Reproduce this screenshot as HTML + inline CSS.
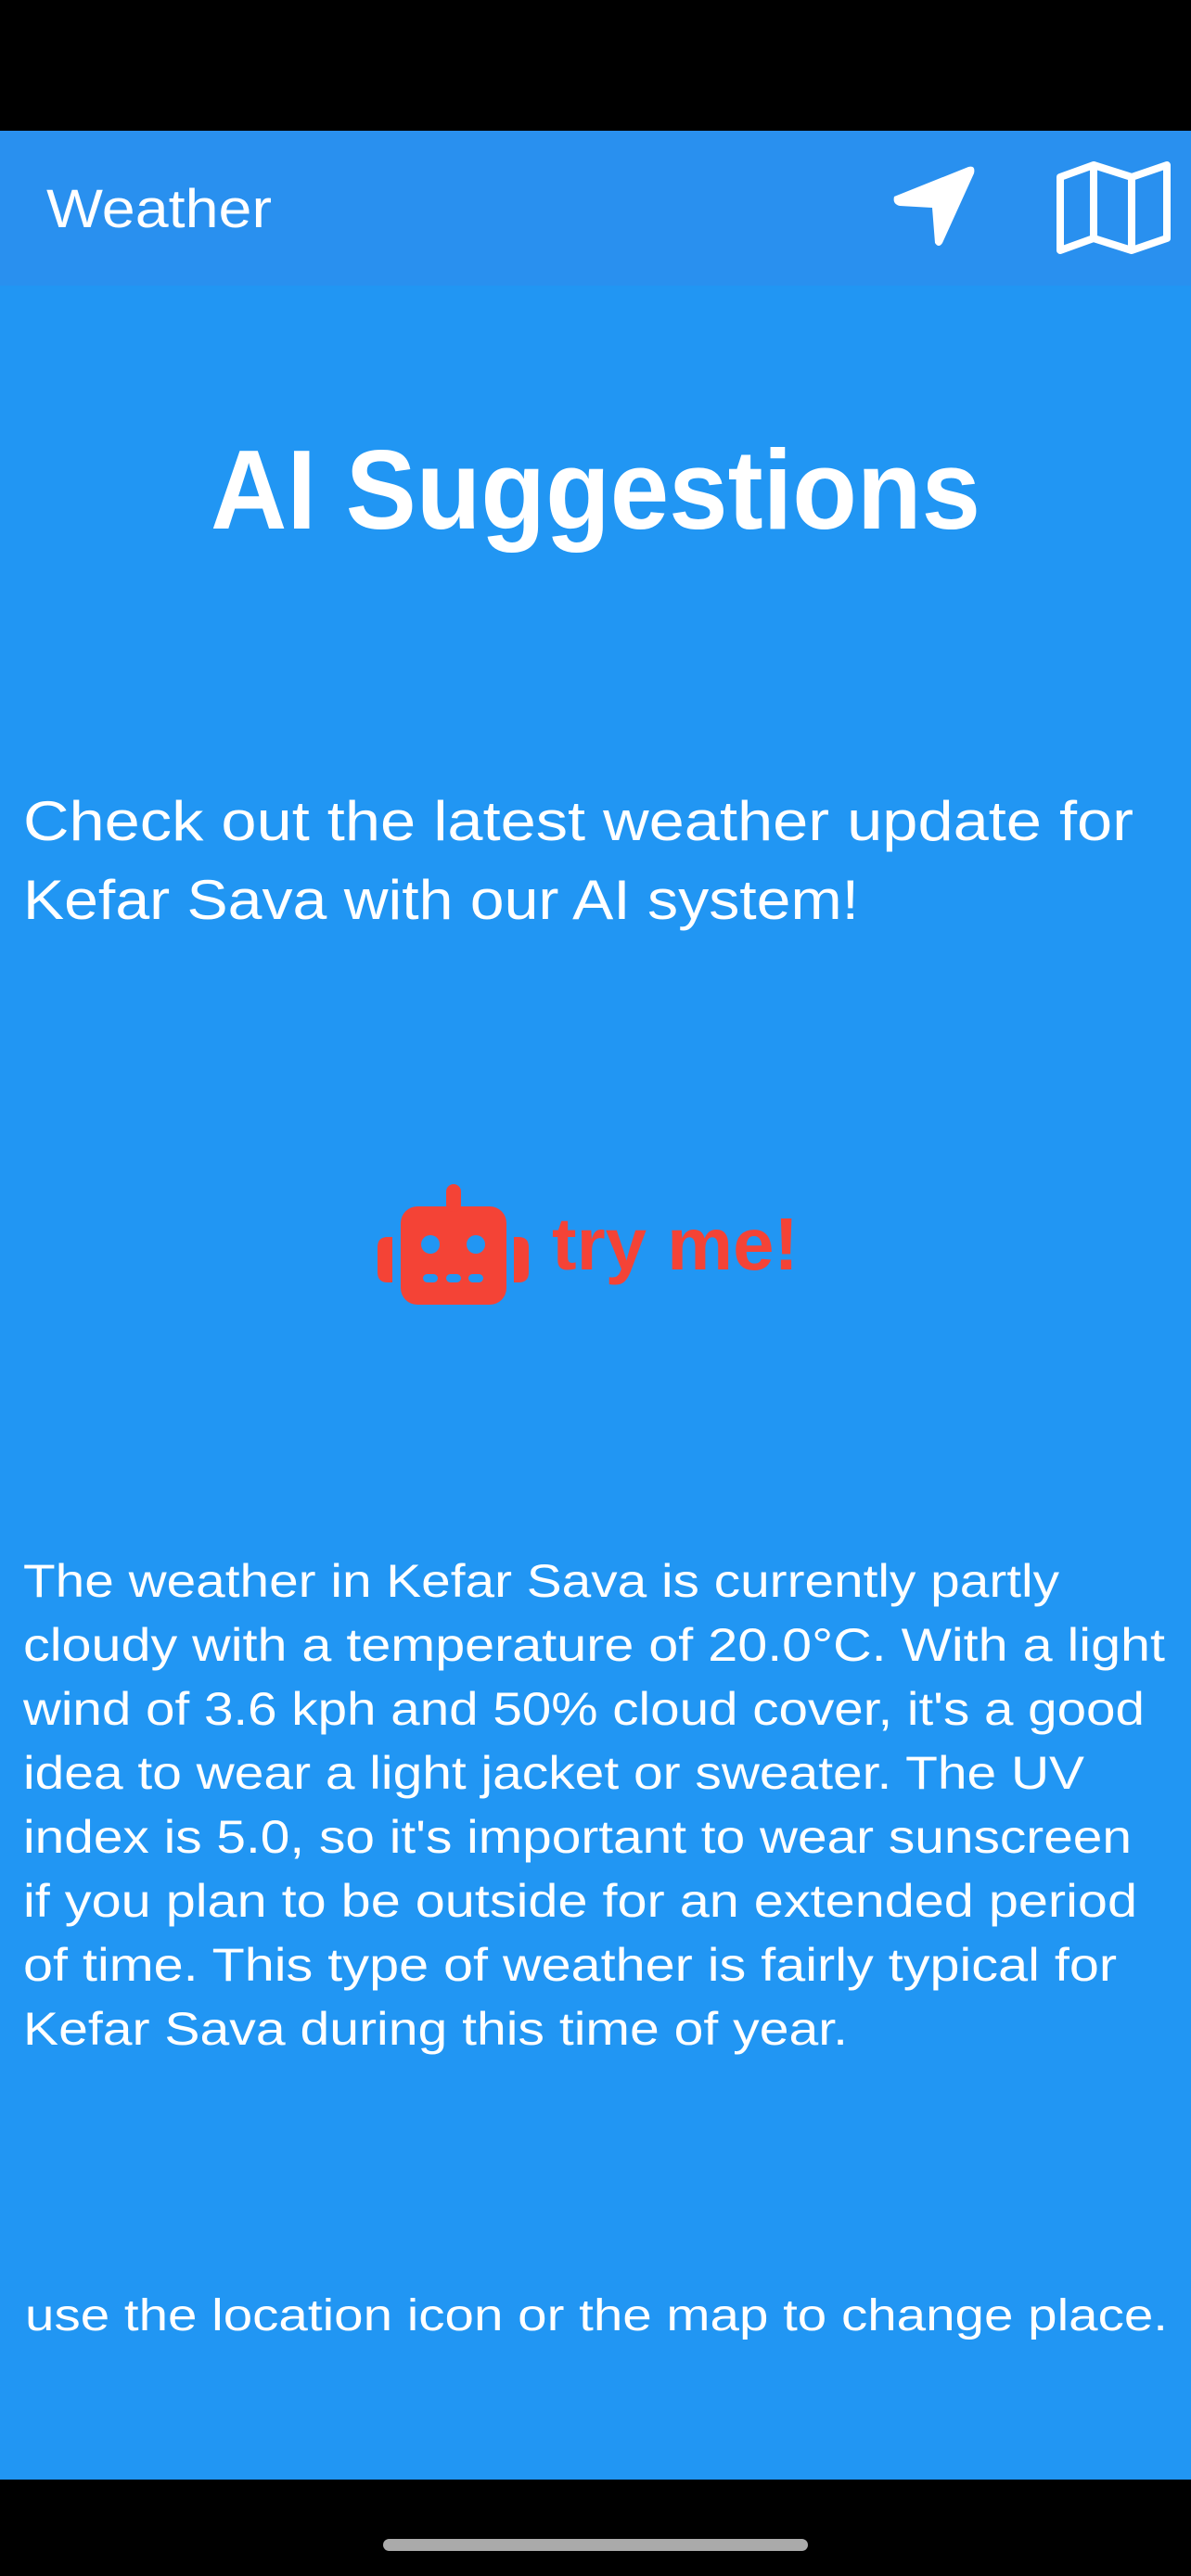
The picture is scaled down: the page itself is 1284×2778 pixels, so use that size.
<!DOCTYPE html>
<html><head><meta charset="utf-8"><style>
html,body{margin:0;padding:0;background:#000;}
svg{display:block}
text{font-family:"Liberation Sans",sans-serif;fill:#fff}
</style></head><body>
<svg width="1284" height="2778" viewBox="0 0 1284 2778" xmlns="http://www.w3.org/2000/svg">
<rect x="0" y="0" width="1284" height="2778" fill="#000"/>
<rect x="0" y="141" width="1284" height="2533" fill="#2196F3"/>
<rect x="0" y="141" width="1284" height="167" fill="#2990EF"/>
<text x="50" y="245" font-size="58" textLength="243" lengthAdjust="spacingAndGlyphs">Weather</text>
<path d="M1044 180 Q1052 178 1050 187 L1016 262 Q1012 268 1008 262 L1005 224 L970 222 Q962 220 964 212 Z" fill="#fff"/>
<path d="M1143 191 L1179 178 L1220 191 L1258 178 L1258 257 L1220 270 L1179 257 L1143 270 Z M1179 178 L1179 257 M1220 191 L1220 270" fill="none" stroke="#fff" stroke-width="8" stroke-linejoin="round"/>
<text x="642" y="570" font-size="122" font-weight="bold" text-anchor="middle" textLength="830" lengthAdjust="spacingAndGlyphs">AI Suggestions</text>
<text x="25" y="906" font-size="60" textLength="1197" lengthAdjust="spacingAndGlyphs">Check out the latest weather update for</text>
<text x="25" y="991" font-size="60" textLength="901" lengthAdjust="spacingAndGlyphs">Kefar Sava with our AI system!</text>
<g fill="#F44336">
<rect x="432" y="1301" width="114" height="106" rx="18"/>
<rect x="481" y="1277" width="16" height="30" rx="8"/>
<path d="M423 1334 L423 1383 L418 1383 Q407 1383 407 1372 L407 1345 Q407 1334 418 1334 Z"/>
<path d="M554 1334 L554 1383 L559 1383 Q570 1383 570 1372 L570 1345 Q570 1334 559 1334 Z"/>
</g>
<g fill="#2196F3">
<circle cx="464" cy="1342" r="10"/><circle cx="513" cy="1342" r="10"/>
<rect x="456" y="1374" width="16" height="9" rx="4.5"/>
<rect x="481" y="1374" width="16" height="9" rx="4.5"/>
<rect x="505" y="1374" width="16" height="9" rx="4.5"/>
</g>
<text x="595" y="1369" font-size="80" font-weight="bold" style="fill:#F44336" textLength="266" lengthAdjust="spacingAndGlyphs">try me!</text>
<g font-size="50">
<text x="25" y="1722" textLength="1117" lengthAdjust="spacingAndGlyphs">The weather in Kefar Sava is currently partly</text>
<text x="25" y="1791" textLength="1231" lengthAdjust="spacingAndGlyphs">cloudy with a temperature of 20.0°C. With a light</text>
<text x="25" y="1860" textLength="1209" lengthAdjust="spacingAndGlyphs">wind of 3.6 kph and 50% cloud cover, it's a good</text>
<text x="25" y="1929" textLength="1144" lengthAdjust="spacingAndGlyphs">idea to wear a light jacket or sweater. The UV</text>
<text x="25" y="1998" textLength="1195" lengthAdjust="spacingAndGlyphs">index is 5.0, so it's important to wear sunscreen</text>
<text x="25" y="2067" textLength="1201" lengthAdjust="spacingAndGlyphs">if you plan to be outside for an extended period</text>
<text x="25" y="2136" textLength="1179" lengthAdjust="spacingAndGlyphs">of time. This type of weather is fairly typical for</text>
<text x="25" y="2205" textLength="889" lengthAdjust="spacingAndGlyphs">Kefar Sava during this time of year.</text>
</g>
<text x="27" y="2513" font-size="48" textLength="1232" lengthAdjust="spacingAndGlyphs">use the location icon or the map to change place.</text>
<rect x="413" y="2738" width="458" height="13" rx="6.5" fill="#aaa"/>
</svg>
</body></html>
